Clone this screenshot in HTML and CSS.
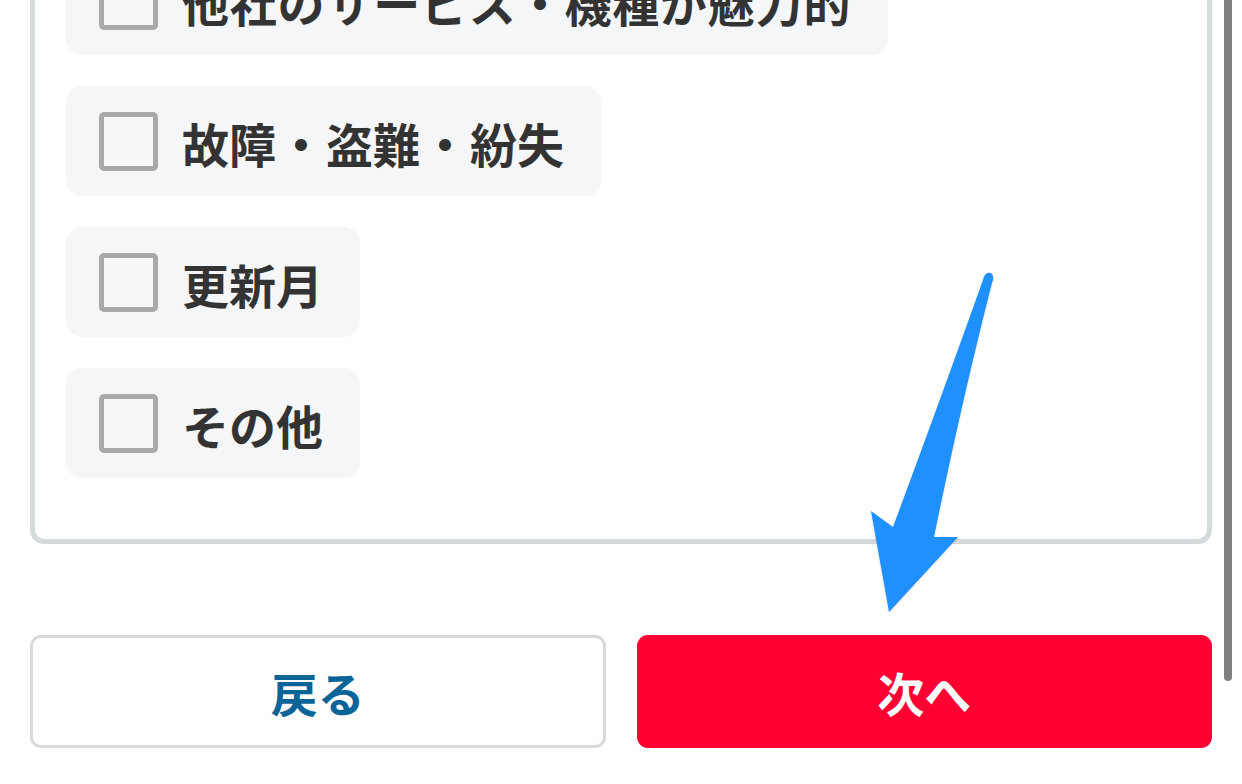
FILE: index.html
```html
<!DOCTYPE html>
<html lang="ja">
<head>
<meta charset="utf-8">
<title>解約理由</title>
<link rel="stylesheet" href="styles.css">
</head>
<body>
<main class="page">
  <section class="panel">
    <ul class="options">
      <li class="option"><span class="box"></span><span class="label label-wide">他社のサービス・機種が魅力的</span></li>
      <li class="option"><span class="box"></span><span class="label">故障<span class="sep">・</span>盗難<span class="sep">・</span>紛失</span></li>
      <li class="option"><span class="box"></span><span class="label">更新月</span></li>
      <li class="option"><span class="box"></span><span class="label">その他</span></li>
    </ul>
  </section>
  <div class="actions">
    <button class="btn btn-back" type="button">戻る</button>
    <button class="btn btn-next" type="button">次へ</button>
  </div>
</main>
<div class="scroll-indicator"></div>
<svg class="annotation" width="1242" height="784" viewBox="0 0 1242 784" aria-hidden="true">
  <path d="M 983 280 Q 985 271 991 273 Q 995 276 992 283 Q 962 400 934 537 L 958 537 L 889 612 L 871 511 L 893 527 Q 942 395 983 280 Z" fill="#1e90ff"/>
</svg>
</body>
</html>
```

FILE: styles.css
```css
* { box-sizing: border-box; }

html, body {
  margin: 0;
  padding: 0;
  background: #ffffff;
  overflow: hidden;
}

body {
  width: 1242px;
  height: 784px;
  position: relative;
  font-family: "Noto Sans CJK JP", "Noto Sans", sans-serif;
  color: #333333;
}

.page {
  padding: 0 30px;
}

.panel {
  margin-top: -91px;
  border: 5px solid #d5dadc;
  border-radius: 14px;
  padding: 31px 31px 61px;
  background: #ffffff;
}

.options {
  list-style: none;
  margin: 0;
  padding: 0;
  display: flex;
  flex-direction: column;
  align-items: flex-start;
  gap: 31px;
}

.option {
  display: flex;
  align-items: center;
  gap: 24px;
  height: 110px;
  padding: 0 37px 0 33px;
  background: #f5f6f8;
  border-radius: 16px;
}

.box {
  width: 59px;
  height: 59px;
  border: 5px solid #a9a9a9;
  border-radius: 5px;
  background: #f7f8fa;
  flex: none;
}

.label {
  font-size: 47px;
  font-weight: 700;
  line-height: 1;
  color: #333333;
  padding-top: 3px;
  white-space: nowrap;
}

.label-wide {
  letter-spacing: 0.8px;
}

.sep {
  margin: 0 1.5px;
}

.actions {
  display: grid;
  grid-template-columns: 1fr 1fr;
  gap: 31px;
  margin-top: 91px;
}

.btn {
  height: 113px;
  border-radius: 11px;
  font-family: "Noto Sans CJK JP", "Noto Sans", sans-serif;
  font-size: 47px;
  font-weight: 700;
  line-height: 1;
  padding: 0;
  cursor: pointer;
}

.btn-back {
  background: #ffffff;
  border: 3px solid #d7d9db;
  color: #0b6497;
}

.btn-next {
  background: #ff0033;
  border: none;
  color: #ffffff;
}

.scroll-indicator {
  position: absolute;
  top: -10px;
  left: 1224px;
  width: 8px;
  height: 691px;
  border-radius: 4px;
  background: #808080;
}

.annotation {
  position: absolute;
  top: 0;
  left: 0;
  pointer-events: none;
  filter: drop-shadow(0 1px 1px rgba(0, 0, 0, 0.15));
}
```
